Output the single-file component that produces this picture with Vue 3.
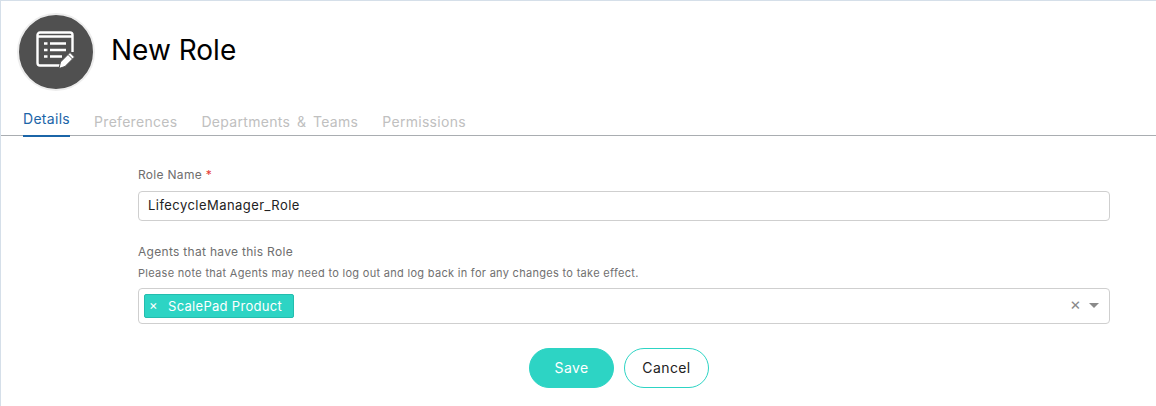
<script setup>
const tabs = ['Details', 'Preferences', 'Departments & Teams', 'Permissions']
</script>

<template>
  <div class="page">
    <div class="header">
      <div class="avatar">
        <svg width="42" height="42" viewBox="0 0 42 42" fill="none">
          <path d="M28 34.500H5A2.500 2.500 0 0 1 2.500 32V4A2.500 2.500 0 0 1 5 1.500H35A2.500 2.500 0 0 1 37.500 4V21" stroke="#fff" stroke-width="2.400" />
          <path d="M2.500 5.500H37.500" stroke="#fff" stroke-width="2.400" />
          <path d="M9 12.500H12.500M9 19H12.500M9 25.500H12.500M15 12.500H31M15 19H31M15 25.500H27" stroke="#fff" stroke-width="2.400" />
          <path d="M24 37.500L25.500 31L35 21.500L39.500 26L30 35.500Z" fill="#fff" stroke="#505050" stroke-width="1" />
          <path d="M33 23.500L37.500 28" stroke="#505050" stroke-width="1" />
        </svg>
      </div>
      <h1 class="title">New Role</h1>
    </div>

    <div class="tabs">
      <div
        v-for="(tab, i) in tabs"
        :key="tab"
        class="tab"
        :class="{ active: i === 0 }"
      >{{ tab }}</div>
    </div>

    <form class="form" @submit.prevent>
      <label class="label">Role Name <span class="req">*</span></label>
      <div class="input">LifecycleManager_Role</div>

      <label class="label agents">Agents that have this Role</label>
      <p class="note">Please note that Agents may need to log out and log back in for any changes to take effect.</p>
      <div class="select">
        <span class="tag"><span class="tag-x">×</span>ScalePad Product</span>
        <span class="clear">×</span>
        <span class="caret"></span>
      </div>

      <div class="actions">
        <button class="btn save" type="button">Save</button>
        <button class="btn cancel" type="button">Cancel</button>
      </div>
    </form>
  </div>
</template>

<style>
html, body {
  background: #fff;
}
</style>

<style scoped>
.page {
  box-sizing: border-box;
  height: 406px;
  overflow: hidden;
  border-top: 1px solid #d5dfe9;
  border-left: 1px solid #d5dfe9;
  font-family: Inter, "Open Sans", sans-serif;
  background: #fff;
}

.header {
  display: flex;
  align-items: center;
  padding: 12px 0 0 16px;
  height: 78px;
}

.avatar {
  box-sizing: border-box;
  width: 78px;
  height: 78px;
  border-radius: 50%;
  background: #505050;
  border: 2px solid #ededed;
  display: flex;
  align-items: center;
  justify-content: center;
}

.title {
  margin: 0 0 4px 16px;
  font-size: 28px;
  font-weight: 400;
  color: #000;
}

.tabs {
  display: flex;
  gap: 24px;
  height: 45px;
  padding-left: 22px;
  border-bottom: 1px solid #a9adb1;
  box-sizing: border-box;
}

.tab {
  padding-top: 22px;
  font-size: 14px;
  line-height: 18px;
  letter-spacing: .3px;
  word-spacing: 2.500px;
  color: #c0c0c0;
}

.tab.active {
  padding-top: 19px;
  height: 25px;
  color: #1b65a8;
  border-bottom: 2px solid #1b65a8;
}

.form {
  display: flex;
  flex-direction: column;
  margin: 0 46px 0 137px;
}

.label {
  font-size: 12px;
  line-height: 16px;
  letter-spacing: .3px;
  color: #6e6e6e;
  margin-top: 31px;
}

.label.agents {
  margin-top: 23px;
}

.req {
  color: #e53935;
}

.input {
  box-sizing: border-box;
  height: 30px;
  margin-top: 8px;
  padding: 0 9px;
  border: 1px solid #cfcfcf;
  border-radius: 4px;
  font-size: 13px;
  line-height: 27px;
  letter-spacing: .45px;
  color: #222;
}

.note {
  margin: 6px 0 0;
  font-size: 11px;
  line-height: 14px;
  letter-spacing: .3px;
  color: #707070;
}

.select {
  box-sizing: border-box;
  height: 36px;
  margin-top: 8px;
  padding: 0 10px 0 5px;
  border: 1px solid #cfcfcf;
  border-radius: 4px;
  display: flex;
  align-items: center;
}

.tag {
  box-sizing: border-box;
  width: 150px;
  height: 24px;
  background: #2dd4c4;
  border: 1px solid #24bdae;
  border-radius: 2px;
  color: #fff;
  font-size: 13px;
  line-height: 21px;
  letter-spacing: .3px;
  white-space: nowrap;
}

.tag-x {
  display: inline-block;
  width: 23px;
  padding-left: 4px;
  box-sizing: border-box;
  vertical-align: 1px;
}

.clear {
  margin: 0 8px 4px auto;
  color: #8a8a8a;
  font-size: 17px;
  line-height: 16px;
}

.caret {
  width: 0;
  height: 0;
  margin-bottom: 1px;
  border-left: 5px solid transparent;
  border-right: 5px solid transparent;
  border-top: 5px solid #8a8a8a;
}

.actions {
  display: flex;
  justify-content: center;
  gap: 10px;
  margin: 24px 10px 0 0;
}

.btn {
  box-sizing: border-box;
  width: 85px;
  height: 40px;
  padding: 0 0 2px;
  border-radius: 20px;
  font-family: inherit;
  font-size: 14px;
  letter-spacing: .4px;
  cursor: pointer;
}

.save {
  background: #2dd4c4;
  border: 1px solid #2dd4c4;
  color: #fff;
}

.cancel {
  background: #fff;
  border: 1px solid #2dd4c4;
  color: #222;
}
</style>
